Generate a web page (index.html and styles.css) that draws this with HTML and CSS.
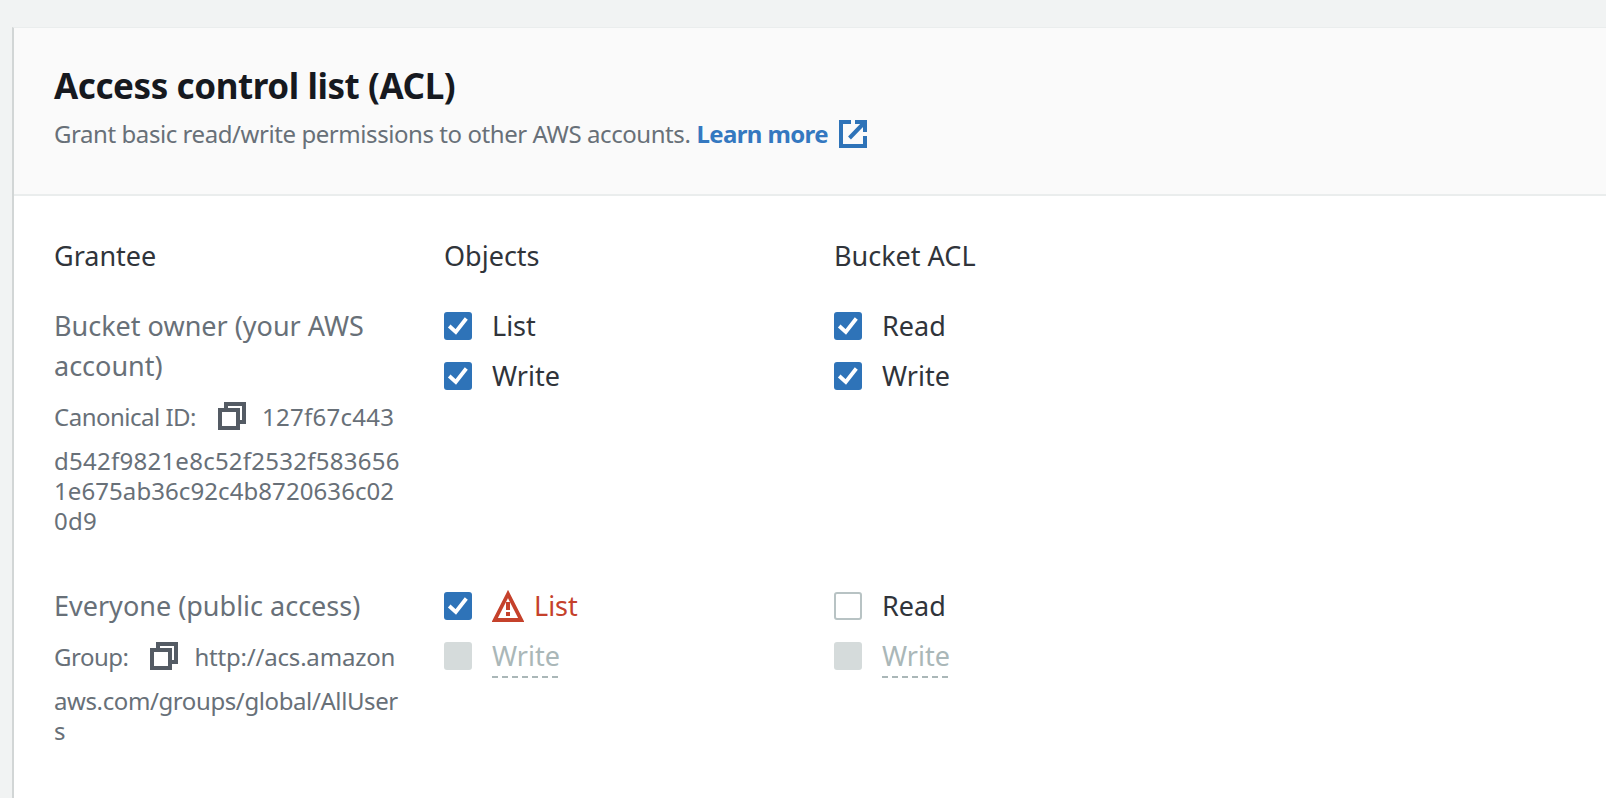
FILE: index.html
```
<!DOCTYPE html>
<html lang="en">
<head>
<meta charset="utf-8">
<title>Access control list (ACL)</title>
<link rel="stylesheet" href="styles.css">
</head>
<body>
<svg class="defs" aria-hidden="true">
  <symbol id="copy" viewBox="0 0 28 28"><path d="M8 7V2h18v18h-5M2 8h18v18H2z" fill="none" stroke="#545b64" stroke-width="4"/></symbol>
  <symbol id="check" viewBox="0 0 28 28"><path d="M5.2 14l6.6 6L22.3 6.5" fill="none" stroke="#fff" stroke-width="3.8"/></symbol>
</svg>
<main class="card">
  <header class="head">
    <h1 class="title">Access control list (ACL)</h1>
    <p class="desc"><span class="intro">Grant basic read/write permissions to other AWS accounts.</span><a class="learn">Learn more</a><svg class="external" viewBox="0 0 28 28"><path d="M12 2H2v24h24V16M16 2h10v10M25 3L10.5 18" fill="none" stroke="#2e73b8" stroke-width="4"/></svg></p>
  </header>
  <section class="grid">
    <div class="colhead">Grantee</div>
    <div class="colhead">Objects</div>
    <div class="colhead">Bucket ACL</div>

    <div class="grantee owner">
      <div class="name">Bucket owner (your AWS<br>account)</div>
      <div class="idrow"><span class="tight">Canonical ID:</span><svg class="copy"><use href="#copy"/></svg><span class="digits">127f67c443</span></div>
      <div class="rest digits">d542f9821e8c52f2532f583656<br><span class="digits-narrow">1e675ab36c92c4b8720636c02</span><br>0d9</div>
    </div>
    <div class="perms">
      <label class="perm"><span class="box on"><svg class="tick"><use href="#check"/></svg></span><span>List</span></label>
      <label class="perm"><span class="box on"><svg class="tick"><use href="#check"/></svg></span><span>Write</span></label>
    </div>
    <div class="perms">
      <label class="perm"><span class="box on"><svg class="tick"><use href="#check"/></svg></span><span>Read</span></label>
      <label class="perm"><span class="box on"><svg class="tick"><use href="#check"/></svg></span><span>Write</span></label>
    </div>

    <div class="grantee">
      <div class="name">Everyone (public access)</div>
      <div class="idrow"><span class="tight">Group:</span><svg class="copy"><use href="#copy"/></svg><span class="url">http://acs.amazon</span></div>
      <div class="rest url-rest">aws.com/groups/global/AllUser<br>s</div>
    </div>
    <div class="perms">
      <label class="perm danger"><span class="box on"><svg class="tick"><use href="#check"/></svg></span><svg class="warn" viewBox="0 0 32 32"><path d="M16 4L2.8 30h26.4z" fill="none" stroke="#c5412b" stroke-width="3.8"/><path d="M16 12v8M16 22v4" stroke="#c5412b" stroke-width="4"/></svg><span>List</span></label>
      <label class="perm off"><span class="box dis"></span><span class="dash">Write</span></label>
    </div>
    <div class="perms">
      <label class="perm"><span class="box"></span><span>Read</span></label>
      <label class="perm off"><span class="box dis"></span><span class="dash">Write</span></label>
    </div>
  </section>
</main>
</body>
</html>
```
FILE: styles.css
```
* { box-sizing: border-box; }
html, body { height: 100%; }
body {
  margin: 0;
  padding: 27px 0 0 12px;
  overflow: hidden;
  background: #f1f3f3;
  color: #16191f;
  font: 27px/40px "Noto Sans", sans-serif;
}
.defs { position: absolute; width: 0; height: 0; }
.card {
  height: 100%;
  background: #fff;
  border-left: 2px solid #d2d6d6;
  border-top: 1px solid #eaeded;
}
.head {
  height: 168px;
  padding: 36px 0 0 40px;
  background: #fafafa;
  border-bottom: 2px solid #eaeded;
}
.title {
  margin: 0;
  font-size: 35px;
  line-height: 44px;
  letter-spacing: -0.42px;
}
.desc {
  display: flex;
  align-items: center;
  margin: 6px 0 0;
  color: #687078;
  font-size: 24px;
  line-height: 40px;
}
.intro { letter-spacing: -0.43px; }
.tight { letter-spacing: -0.5px; }
.digits { letter-spacing: 0.25px; }
.digits-narrow { letter-spacing: 0.08px; }
.url { letter-spacing: -0.2px; }
.url-rest { letter-spacing: -0.4px; }
.learn {
  margin-left: 6px;
  color: #3478c0;
  font-weight: 700;
  letter-spacing: -0.62px;
}
.external { width: 28px; height: 28px; margin-left: 11px; }
.grid {
  display: grid;
  grid-template-columns: 390px 390px 390px;
  padding: 40px 0 0 40px;
}
.colhead { height: 70px; color: #30343a; }
.grantee { color: #687078; }
.owner { height: 280px; }
.idrow {
  display: flex;
  align-items: center;
  height: 40px;
  margin-top: 11px;
  font-size: 24px;
}
.copy {
  width: 28px;
  height: 28px;
  margin: -2px 16px 0 22px;
}
.rest { margin-top: 9px; font-size: 24px; line-height: 30px; }
.perm {
  display: flex;
  align-items: center;
  height: 50px;
  padding-bottom: 10px;
  color: #30343a;
}
.box {
  display: flex;
  width: 28px;
  height: 28px;
  margin-right: 20px;
  border: 2px solid #b8c3c4;
  border-radius: 3px;
}
.box.on { border: 0; background: #2e73b8; }
.box.dis { border: 0; background: #d5dbdb; }
.tick { width: 28px; height: 28px; }
.warn {
  width: 32px;
  height: 32px;
  margin-right: 10px;
}
.danger { color: #c5412b; }
.off { color: #aab7b8; }
.dash {
  height: 42px;
  margin-top: 2px;
  background: repeating-linear-gradient(90deg, #aab7b8 0 6px, transparent 6px 10px) bottom / 100% 2px no-repeat;
}
```
